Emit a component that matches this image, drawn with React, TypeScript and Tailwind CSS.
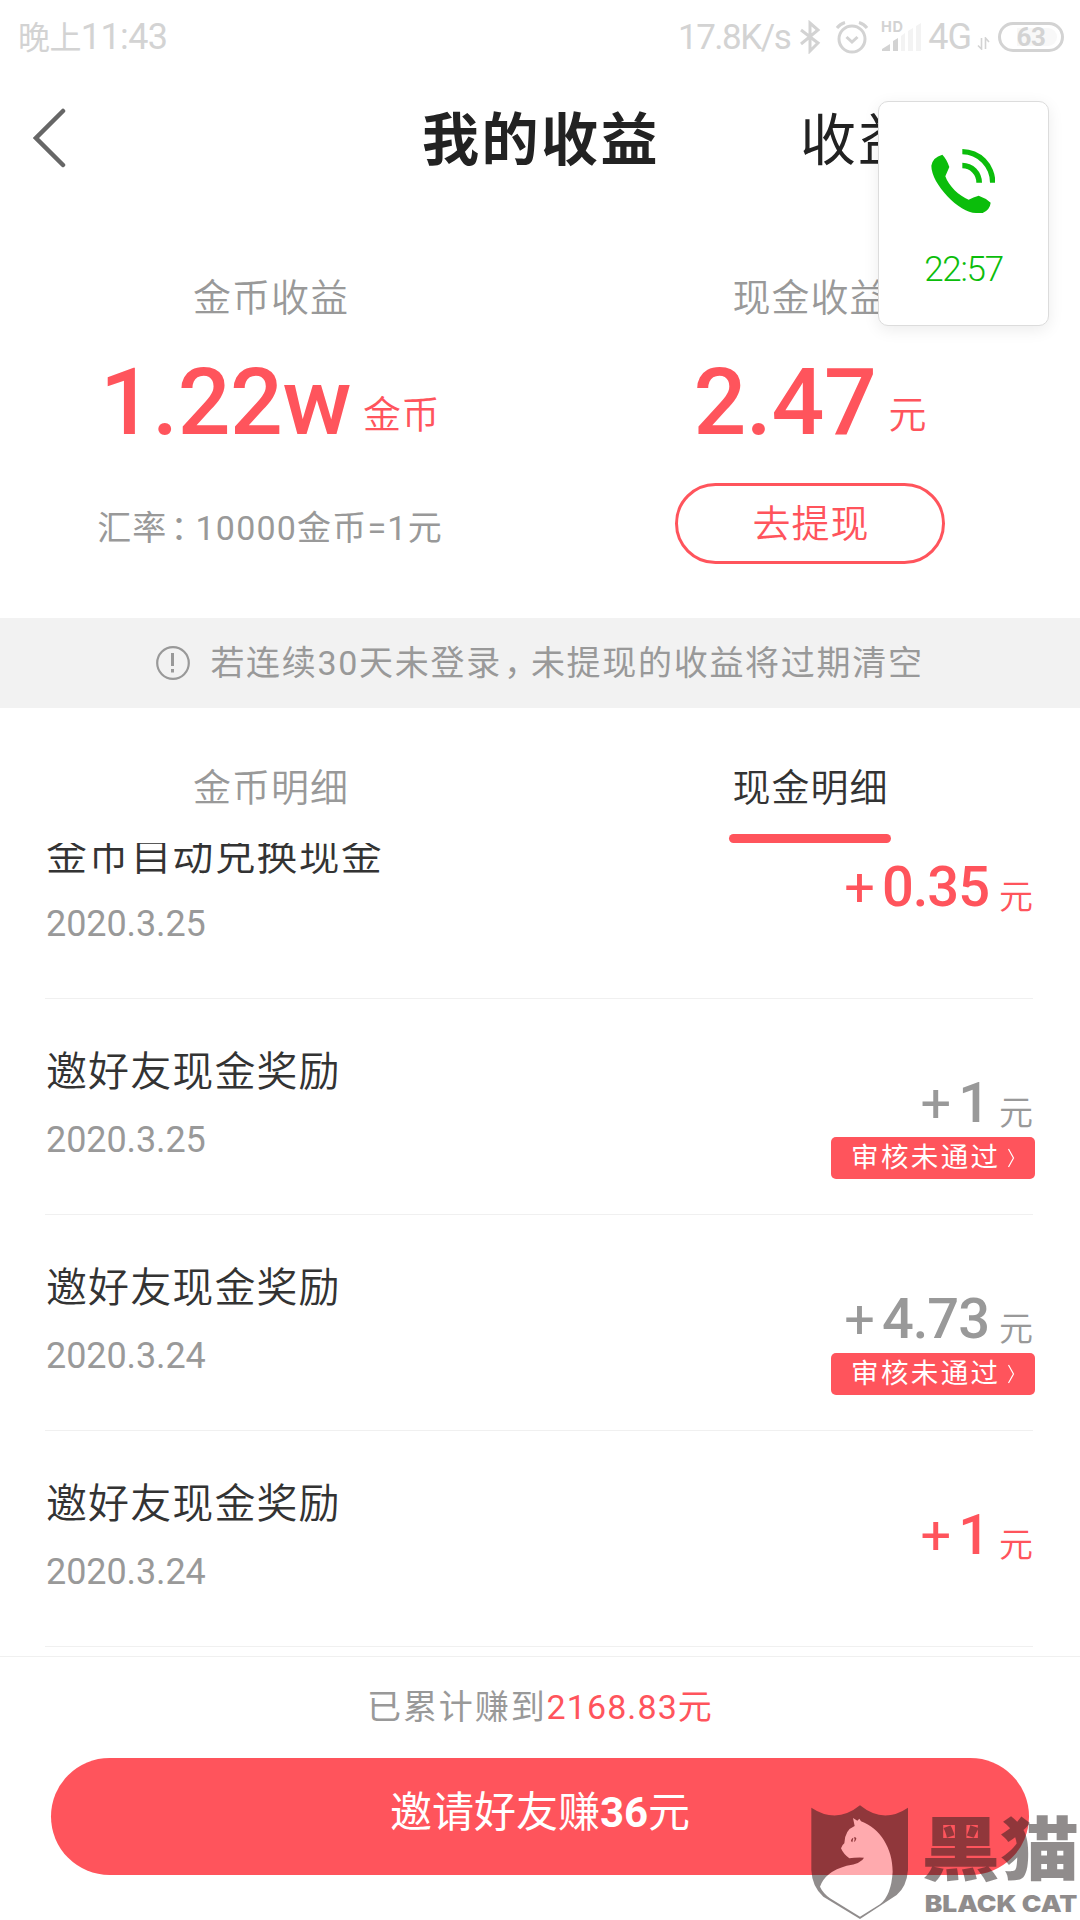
import React from 'react'

type Record = {
    title: string
    date: string
    amount: string
    rejected?: boolean
    muted?: boolean
}

const records: Record[] = [
    { title: '金币自动兑换现金', date: '2020.3.25', amount: '0.35' },
    { title: '邀好友现金奖励', date: '2020.3.25', amount: '1', rejected: true, muted: true },
    { title: '邀好友现金奖励', date: '2020.3.24', amount: '4.73', rejected: true, muted: true },
    { title: '邀好友现金奖励', date: '2020.3.24', amount: '1' },
]

const StatusBar = () => (
    <div className="flex h-[74px] shrink-0 items-center justify-between pl-[18px] pr-[16px] text-[#d3d3d3]">
        <span className="text-[32px] leading-none tracking-[-0.600px]">
            晚上<span className="text-[36px]">11:43</span>
        </span>
        <div className="flex items-center">
            <span className="text-[35px] leading-none tracking-[-1.500px]">17.8K/s</span>
            {/* Bluetooth */}
            <svg className="ml-[9px] h-[34px] w-[22px]" viewBox="0 0 22 34" fill="none" stroke="currentColor" strokeWidth="3">
                <path d="M2 10 19 23 11 31V3l8 7L2 24" />
            </svg>
            {/* Alarm */}
            <svg className="ml-[14px] h-[34px] w-[34px]" viewBox="0 0 34 34" fill="none" stroke="currentColor" strokeWidth="3">
                <circle cx="17" cy="19" r="13" />
                <path d="M11.500 17 17 22l5.500-5M2 8Q5 4 10 2.500M32 8Q29 4 24 2.500" />
            </svg>
            {/* Signal */}
            <svg className="ml-[12px] h-[38px] w-[42px]" viewBox="0 -2 42 38" fill="currentColor">
                <text x="0" y="12" fontSize="14.5" fontWeight="700" fontFamily="Inter" textLength="22">HD</text>
                <path d="M1 31v-2l8-5v7ZM12 31V21l5-3v13Z" />
                <path fill="#f3f3f3" d="M20 31V16l4-3v18ZM27 31V11l5-3v23ZM35 31V6l5-3v28Z" />
            </svg>
            <span className="ml-[5px] text-[36px] leading-none tracking-[-1px]">4G</span>
            <svg className="mt-[12px] ml-[6px] h-[13px] w-[13px]" viewBox="0 0 13 13" fill="none" stroke="currentColor" strokeWidth="1.600">
                <path d="M1 8.500 4.500 12V1M8.500 12V1l3.500 4" />
            </svg>
            <span className="relative ml-[8px] flex h-[30px] w-[66px] items-center justify-center rounded-full border-[3px] border-current text-[26px] leading-none font-bold tracking-[-0.500px]">
                <span className="absolute top-[3px] left-[16px] h-[18px] w-[40px] rounded-r-full bg-[#f8f8f8]" />
                <span className="relative">63</span>
            </span>
        </div>
    </div>
)

const CallCard = () => (
    <div className="absolute top-[101px] left-[878px] flex h-[225px] w-[171px] flex-col items-center rounded-[10px] border border-[#dcdcdc] bg-white pt-[47px] text-[#0bbd0b] shadow-[0_4px_16px_rgba(0,0,0,0.08)]">
        <svg className="mr-[2px] h-[64px] w-[64px]" viewBox="0 0 192 192" fill="currentColor">
            <path d="M34 17Q5 25 1 50C1 105 85 192 135 192h20q22-10 24-31Q162 146 143 140q-16 4-30 12C85 142 52 110 43 82L55 54Q47 30 34 17Z" />
            <path d="M94 0a99 101 0 0 1 99 101h-16A83 85 0 0 0 94 16ZM94 41a59 60 0 0 1 59 60h-17a42 43 0 0 0-42-43Z" />
        </svg>
        <span className="mt-[36px] text-[35px] leading-[41px] font-[350] tracking-[-1.300px]">22:57</span>
    </div>
)

const Summary = () => (
    <div className="grid h-[420px] shrink-0 grid-cols-2 text-center">
        <div className="flex flex-col items-center">
            <p className="mt-[71px] pl-[2px] text-[38px] leading-[58px] font-[350] tracking-[1px] text-[#999]">金币收益</p>
            <p className="mt-[21px] flex h-[110px] text-[#ff545c]">
                <span className="text-[93px] leading-[110px] font-medium tracking-[-0.500px]">1.22w</span>
                <span className="ml-[12px] pt-[38px] text-[38px] leading-[58px] font-[350] tracking-[0.500px]">金币</span>
            </p>
            <p className="mt-[45px] text-[34px] leading-[50px] tracking-[1.200px] text-[#999]">
                汇率<span className="pl-[3px] tracking-[-9px]">：</span>10000金币=1元
            </p>
        </div>
        <div className="flex flex-col items-center">
            <p className="mt-[71px] pl-[1px] text-[38px] leading-[58px] font-[350] tracking-[1px] text-[#999]">现金收益</p>
            <p className="mt-[21px] flex h-[110px] text-[#ff545c]">
                <span className="text-[93px] leading-[110px] font-medium tracking-[-0.400px]">2.47</span>
                <span className="ml-[12px] pt-[38px] text-[38px] leading-[58px] font-[350]">元</span>
            </p>
            <button className="mt-[25px] h-[81px] w-[270px] rounded-full border-[3px] border-[#ff545c] pl-[2px] text-[38px] leading-[72px] font-[350] tracking-[1px] text-[#ff545c]">
                去提现
            </button>
        </div>
    </div>
)

const Notice = () => (
    <div className="flex h-[90px] shrink-0 items-center justify-center bg-[#f2f2f2] text-[#999]">
        <svg className="mr-[20px] h-[36px] w-[34px]" viewBox="0 0 34 36" fill="none" stroke="currentColor">
            <circle cx="17" cy="18" r="15.800" strokeWidth="2.200" />
            <path d="M16.500 8v13M16.500 24v3.500" strokeWidth="3" />
        </svg>
        <span className="text-[34px] leading-[50px] tracking-[1.700px]">
            若连续30天未登录<span className="pl-[2px] tracking-[-7px]">，</span>未提现的收益将过期清空
        </span>
    </div>
)

const Tabs = () => (
    <div className="grid h-[135px] shrink-0 grid-cols-2 text-[38px] leading-[58px] font-[350] tracking-[1px]">
        <div className="pt-[51px] pl-[2px] text-center text-[#999]">金币明细</div>
        <div className="flex flex-col items-center justify-between pt-[51px] text-[#333]">
            <span className="pl-[1px]">现金明细</span>
            <span className="h-[9px] w-[162px] rounded-full bg-[#ff545c]" />
        </div>
    </div>
)

const RecordRow = ({ record }: { record: Record }) => (
    <div className="mr-[47px] ml-[45px] flex h-[216px] shrink-0 justify-between border-b border-[#f0f0f0]">
        <div className="pt-[43px] pl-[1px]">
            <p className="text-[41px] leading-[60px] font-[350] tracking-[1.100px] text-[#333]">{record.title}</p>
            <p className="mt-[17px] text-[36px] leading-[42px] tracking-[-0.100px] text-[#999]">{record.date}</p>
        </div>
        <div className="mr-[-2px] flex flex-col items-end pt-[69px]">
            <p className={`flex h-[68px] items-start pr-[2px] ${record.muted ? 'text-[#999]' : 'text-[#ff545c]'}`}>
                <span className="pt-[2px] text-[54px] leading-[68px]">+</span>
                <span className="ml-[7px] pt-[1px] text-[56px] leading-[68px] font-medium tracking-[-1px]">{record.amount}</span>
                <span className="ml-[10px] pt-[20px] text-[34px] leading-[50px] font-[350]">元</span>
            </p>
            {record.rejected && (
                <p className="mt-[1px] flex h-[42px] w-[204px] items-center rounded-[5px] bg-[#ff545c] pl-[20px] text-[27.500px] leading-[38px] tracking-[2.400px] text-white">
                    审核未通过
                    <svg className="ml-[6px] h-[20px] w-[8px]" viewBox="0 0 8 20" fill="none" stroke="currentColor" strokeWidth="1.200">
                        <path d="M1.500 1 6.500 10 1.500 19" />
                    </svg>
                </p>
            )}
        </div>
    </div>
)

const Watermark = () => (
    <svg className="absolute top-[1780px] left-[780px] h-[140px] w-[300px] opacity-50" viewBox="0 0 900 420">
        <path
            fill="#231c1c"
            d="M94 83Q170 133 240 76Q310 133 384 83V270Q380 320 350 345L240 417L130 350Q96 320 94 270Z"
        />
        <path
            fill="#fff"
            d="M219 114 232 122 238 116 243 124C300 145 338 205 338 275Q334 345 300 373L240 410L150 355Q128 338 120 320Q135 275 200 257Q245 250 252 233Q225 232 208 235Q190 222 183 205Q186 195 193 190Q194 150 224 138Z"
        />
        <path fill="#231c1c" d="M213 181q3-8 7-8l-3 14q-4-1-4-6ZM222 172q7-2 7 4-2 7-7 10l2-8Z" />
        <g fill="#231c1c" fontWeight="900">
            <text x="424" y="284" fontSize="207" textLength="474" lengthAdjust="spacingAndGlyphs">黑猫</text>
            <text x="434" y="397" fontSize="68" fontFamily="Inter" textLength="458" lengthAdjust="spacingAndGlyphs">BLACK CAT</text>
        </g>
    </svg>
)

export default function App() {
    return (
        <div className="relative flex h-[1920px] w-[1080px] flex-col overflow-hidden bg-white font-[Roboto,'Noto_Sans_CJK_SC',sans-serif]">
            <StatusBar />
            {/* Nav */}
            <div className="flex h-[124px] shrink-0 items-center pl-[33px] text-[#222]">
                <svg className="mt-[4px] h-[62px] w-[34px]" viewBox="0 0 34 62" fill="none" stroke="#666" strokeWidth="4.500" strokeLinecap="round">
                    <path d="M30 4 3 31 30 58" />
                </svg>
                <h1 className="mt-[10px] ml-[355px] text-[57px] leading-[84px] font-bold tracking-[2.500px]">我的收益</h1>
                <span className="mt-[10px] ml-[140px] text-[56px] leading-[84px] tracking-[2px]">收益</span>
            </div>
            <Summary />
            <Notice />
            <Tabs />
            {/* Scrolled list, first row is cut off under the tabs */}
            <div className="flex h-[813px] shrink-0 flex-col justify-end overflow-hidden">
                {records.map((record, index) => (
                    <RecordRow key={index} record={record} />
                ))}
                <div className="h-[9px] shrink-0" />
            </div>
            <div className="flex h-[264px] shrink-0 flex-col items-center border-t border-[#f0f0f0] pt-[25px]">
                <p className="text-[34px] leading-[50px] tracking-[1.900px] text-[#999]">
                    已累计赚到<span className="tracking-[1.100px] text-[#ff545c]">2168.83元</span>
                </p>
                <button className="mt-[26px] h-[117px] w-[978px] rounded-full bg-[#ff545c] pb-[8px] text-[42px] text-white">
                    邀请好友赚<b>36</b>元
                </button>
            </div>
            <CallCard />
            <Watermark />
        </div>
    )
}
